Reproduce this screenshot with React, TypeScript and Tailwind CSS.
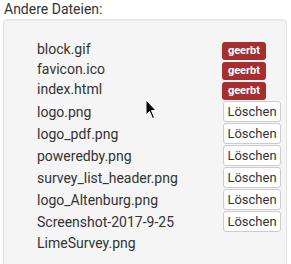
import React from 'react';

type FileRow = { name: string; inherited: boolean };

const files: FileRow[] = [
  { name: 'block.gif', inherited: true },
  { name: 'favicon.ico', inherited: true },
  { name: 'index.html', inherited: true },
  { name: 'logo.png', inherited: false },
  { name: 'logo_pdf.png', inherited: false },
  { name: 'poweredby.png', inherited: false },
  { name: 'survey_list_header.png', inherited: false },
  { name: 'logo_Altenburg.png', inherited: false },
  { name: 'Screenshot-2017-9-25 LimeSurvey.png', inherited: false },
];

export default function App() {
  return (
    <div
      className="relative w-[291px] h-[264px] overflow-hidden bg-white text-[#333] text-[14px]"
      style={{ fontFamily: 'Roboto, "Liberation Sans", sans-serif' }}
    >
      <div className="pl-[4px] pt-[1px] leading-[16px]">Andere Dateien:</div>
      <div className="mt-[2px] ml-[3px] w-[284px] h-[300px] rounded-[4px] border border-[#e3e3e3] bg-[#f5f5f5] shadow-[inset_0_1px_1px_rgba(0,0,0,0.05)] pt-[21px] pl-[33px] pr-[5px]">
        {files.map((f) => (
          <div
            key={f.name}
            className={`flex justify-between ${f.inherited ? 'items-center min-h-[20px]' : 'items-start min-h-[22px]'}`}
          >
            <span className={`w-[180px] leading-[21px] ${f.inherited ? '-mt-[4px]' : 'pt-[1px]'}`}>{f.name}</span>
            {f.inherited ? (
              <span className="mr-[15px] h-[18px] px-[6px] rounded-[3px] bg-[#a52f2f] text-white text-[11px] font-bold leading-[18px]">
                geerbt
              </span>
            ) : (
              <button className="h-[21px] w-[58px] rounded-[3px] border border-[#ccc] bg-white text-[13px] leading-[19px] text-[#333]">
                Löschen
              </button>
            )}
          </div>
        ))}
      </div>
      <svg className="absolute left-[145px] top-[99px]" width="14" height="22" viewBox="0 0 14 22">
        <path d="M1 1 L1 16 L4.5 12.5 L7.5 19.5 L9.5 18.5 L6.5 11.5 L11 11.5 Z" fill="#000" stroke="#fff" strokeWidth="1" />
      </svg>
    </div>
  );
}
